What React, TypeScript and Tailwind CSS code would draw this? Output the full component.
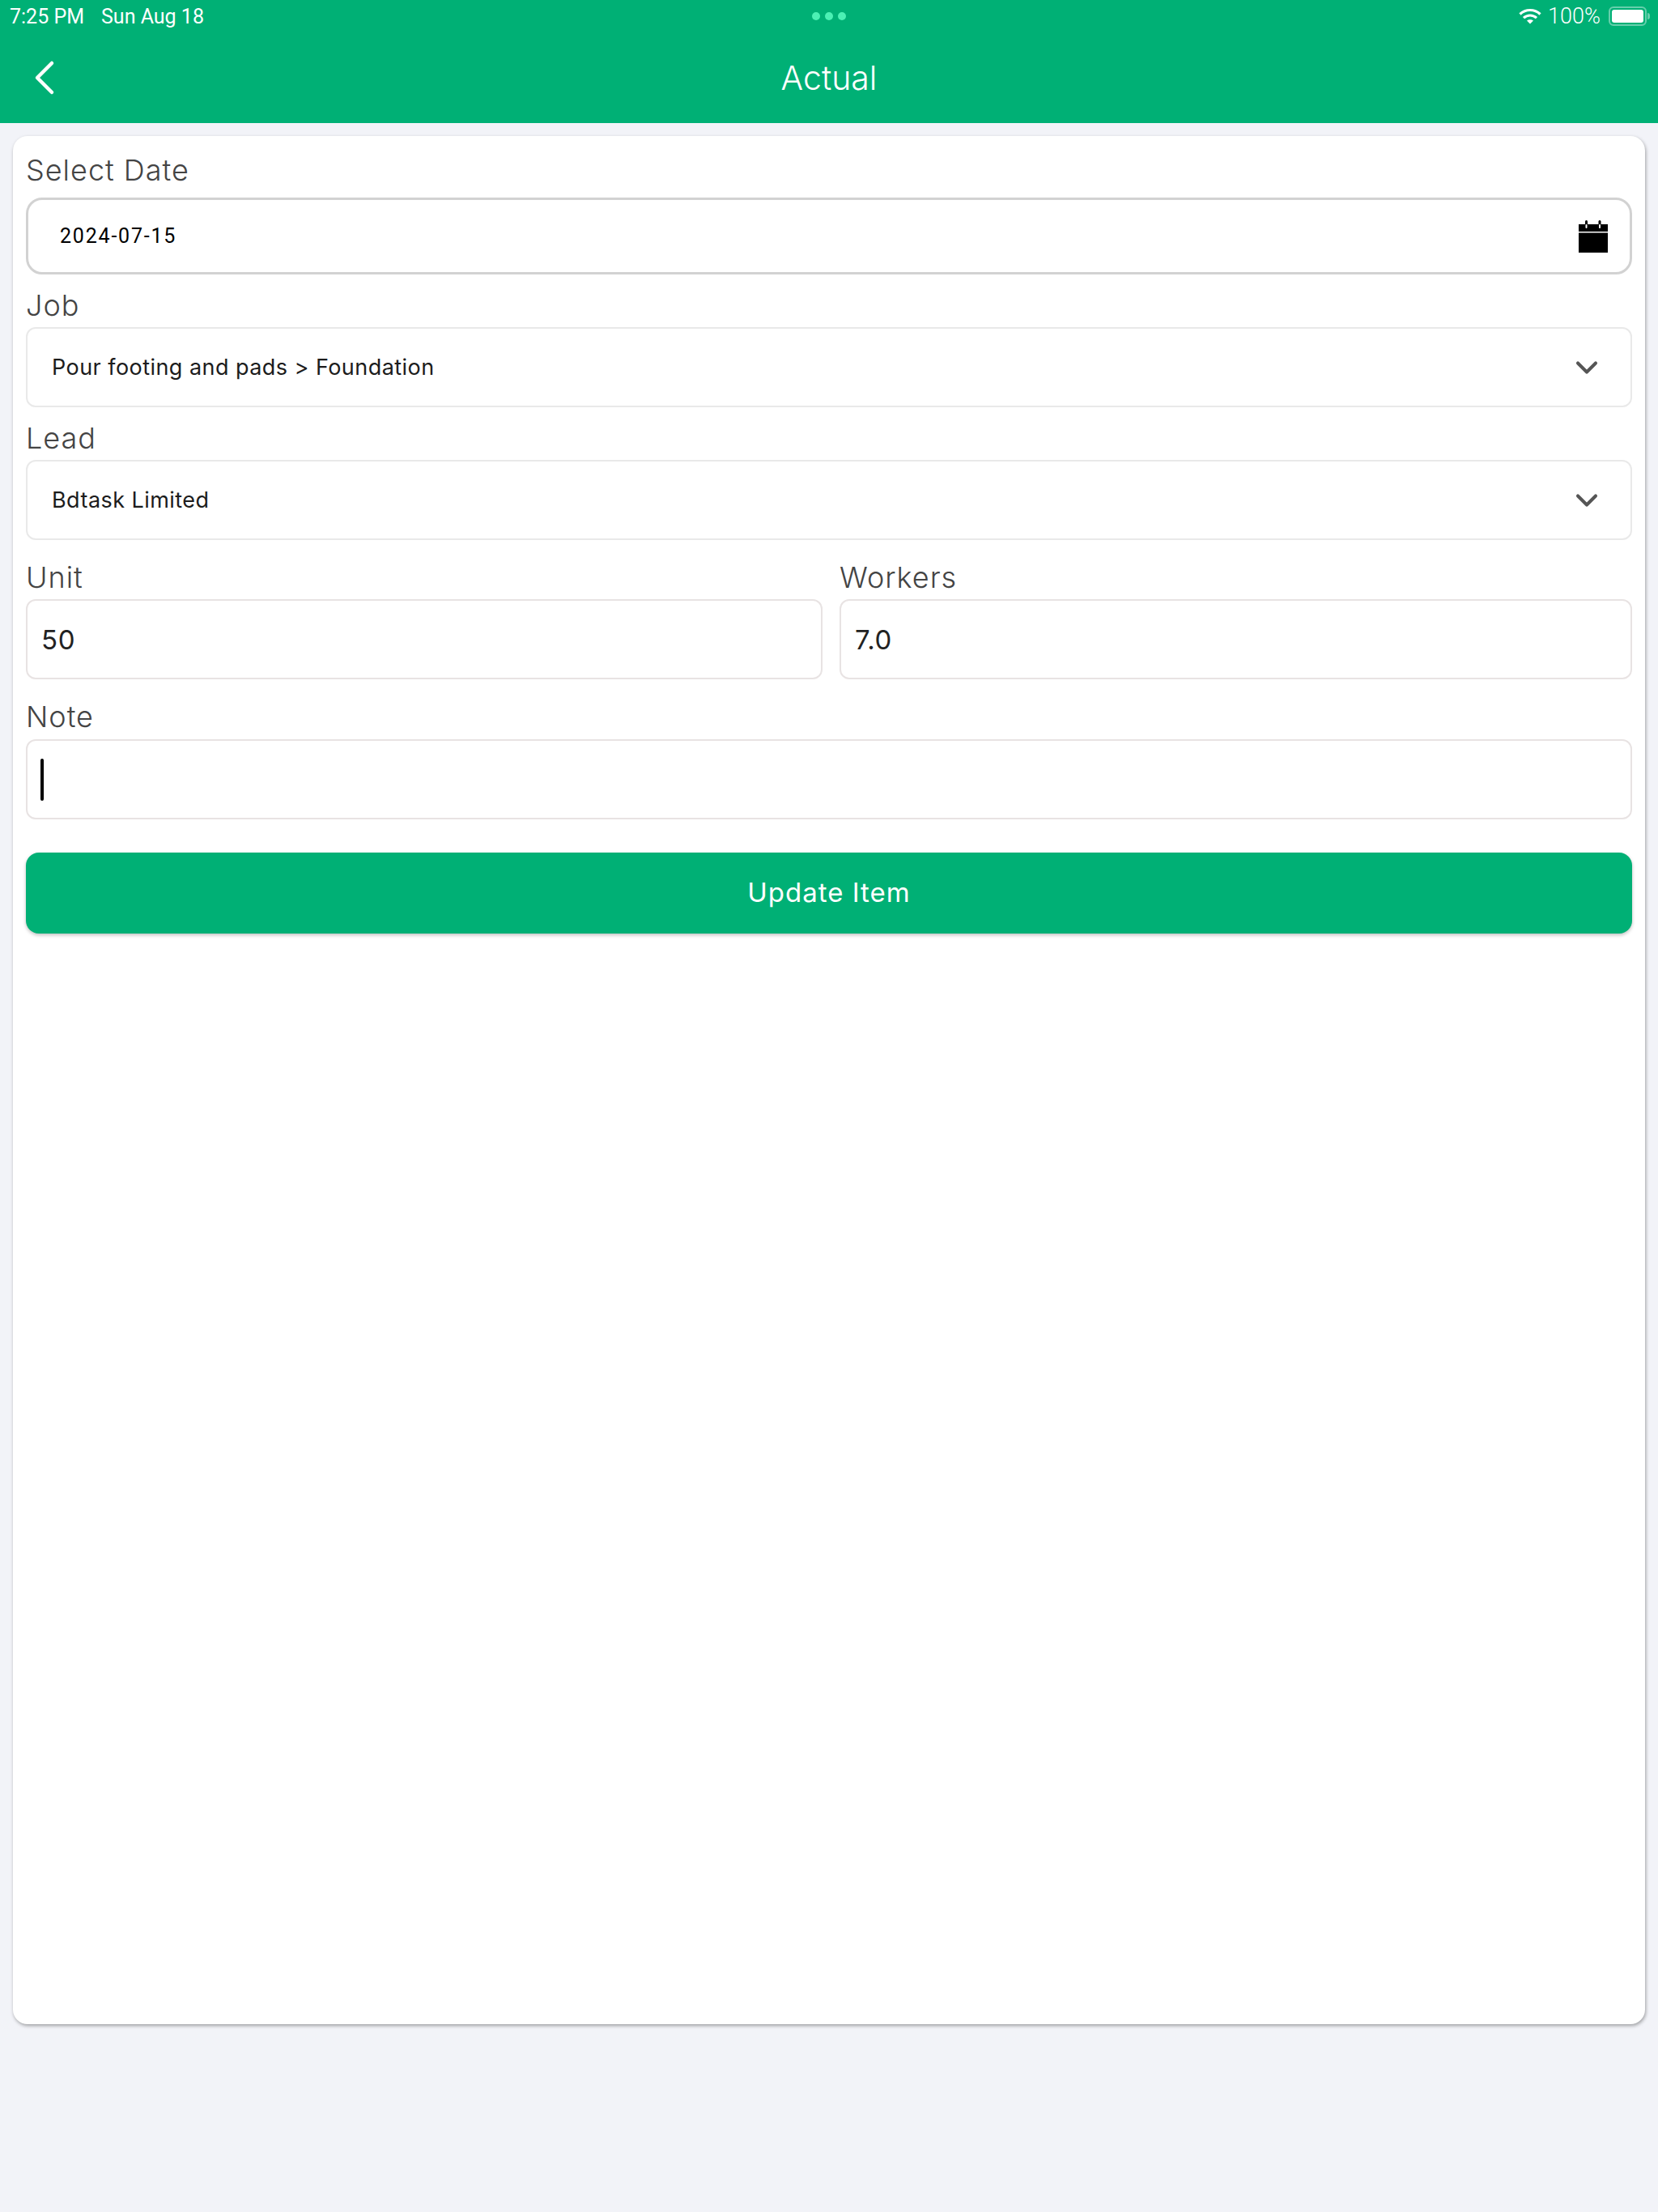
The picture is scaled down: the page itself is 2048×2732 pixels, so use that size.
import { ChevronDown, ChevronLeft } from "lucide-react";

const GREEN = "bg-[#00b075]";

function Label({ children }: { children: string }) {
  return <div className="h-full flex items-center text-[36px] leading-none tracking-[1px] font-light text-[#444444]">{children}</div>;
}

function SelectField({ label, value }: { label: string; value: string }) {
  return (
    <div>
      <div className="h-[65px] pt-[10px]">
        <Label>{label}</Label>
      </div>
      <div className="h-[99px] flex items-center justify-between border-2 border-[#e9e9e9] rounded-[12px] pl-[30px] pr-[32px]">
        <span className="mt-[2px] text-[27px] tracking-[0.45px] text-[#1c1c1c]">{value}</span>
        <ChevronDown className="w-[44px] h-[44px] text-[#555555]" strokeWidth={2.2} />
      </div>
    </div>
  );
}

function TextField({ label, value, caret, labelHeight }: { label: string; value?: string; caret?: boolean; labelHeight: string }) {
  return (
    <div>
      <div className={`${labelHeight} pt-[18px]`}>
        <Label>{label}</Label>
      </div>
      <div className="h-[99px] flex items-center border-2 border-[#e8e3e3] rounded-[12px] px-[17px]">
        {caret ? <div className="w-[4px] h-[52px] -ml-[1px] rounded-full bg-black" /> : <span className="mt-[2px] text-[33px] tracking-[0.6px] text-[#222222]">{value}</span>}
      </div>
    </div>
  );
}

export default function App() {
  return (
    <div className="min-h-[2732px] bg-[#f2f3f8] font-['Inter',sans-serif]">
      {/* Status bar + nav */}
      <div className={`${GREEN} h-[152px] text-white`}>
        <div className="h-[40px] px-[12px] flex items-center justify-between relative">
          <div className="text-[25px] leading-none flex gap-[21px] font-['Roboto',sans-serif]">
            <span>7:25 PM</span>
            <span>Sun Aug 18</span>
          </div>
          <div className="absolute left-[1003px] top-[15px] flex gap-[6px]">
            <div className="w-[10px] h-[10px] rounded-full bg-[#4cf0b4]" />
            <div className="w-[10px] h-[10px] rounded-full bg-[#4cf0b4]" />
            <div className="w-[10px] h-[10px] rounded-full bg-[#4cf0b4]" />
          </div>
          <div className="flex items-center -mr-[2px]">
            <svg width="28" height="21" viewBox="0 0 28 21" fill="none" stroke="white" strokeWidth="3.2" className="mr-[8px]">
              <path d="M1.5 7.5C8.5 0.8 19.5 0.8 26.5 7.5" />
              <path d="M6 12.2C10.5 7.9 17.5 7.9 22 12.2" />
              <path d="M14 19.5 L10 15.6 C12.2 13.7 15.8 13.7 18 15.6 Z" fill="white" stroke="none" />
            </svg>
            <span className="text-[27px] leading-none font-['Roboto',sans-serif] font-light mr-[10px]">100%</span>
            <div className="w-[47px] h-[24px] rounded-[6px] border-2 border-white/40 p-[2px]">
              <div className="w-full h-full rounded-[3px] bg-white" />
            </div>
            <div className="w-[3px] h-[8px] ml-[1px] rounded-r-full bg-white/40" />
          </div>
        </div>
        <div className="h-[112px] relative flex items-center justify-center">
          <ChevronLeft className="absolute left-[19px] top-[20px] w-[72px] h-[72px]" strokeWidth={1.5} />
          <span className="text-[41px] leading-none font-light">Actual</span>
        </div>
      </div>

      {/* Form card */}
      <div className="mx-[16px] mt-[16px] h-[2332px] bg-white rounded-[18px] px-[16px] shadow-[1px_2px_4px_rgba(0,0,0,0.35)]">
        <div className="h-[76px] pt-[8px]">
          <Label>Select Date</Label>
        </div>
        <div className="h-[95px] flex items-center justify-between border-[3px] border-[#d2d2d2] rounded-[20px] pl-[39px] pr-[27px]">
          <span className="text-[25px] tracking-[1.8px] text-black font-['Roboto',sans-serif]">2024-07-15</span>
          <svg width="36" height="40" viewBox="0 0 36 40">
            <rect x="0" y="5" width="36" height="9" fill="black" />
            <rect x="0" y="15.5" width="36" height="24.5" fill="black" />
            <rect x="8" y="0" width="3" height="10" rx="1.5" fill="black" />
            <rect x="24.5" y="0" width="3" height="10" rx="1.5" fill="black" />
            <rect x="8.5" y="5" width="2" height="5" rx="1" fill="white" />
            <rect x="25" y="5" width="2" height="5" rx="1" fill="white" />
          </svg>
        </div>

        <SelectField label="Job" value="Pour footing and pads > Foundation" />
        <SelectField label="Lead" value="Bdtask Limited" />

        <div className="grid grid-cols-[984px_1fr] gap-[21px]">
          <TextField label="Unit" value="50" labelHeight="h-[73px]" />
          <TextField label="Workers" value="7.0" labelHeight="h-[73px]" />
        </div>
        <TextField label="Note" caret labelHeight="h-[74px]" />

        <div className={`${GREEN} mt-[41px] h-[100px] rounded-[16px] flex items-center justify-center text-white text-[33px] tracking-[1px] shadow-[0_2px_4px_rgba(0,0,0,0.25)]`}>
          Update Item
        </div>
      </div>
    </div>
  );
}
